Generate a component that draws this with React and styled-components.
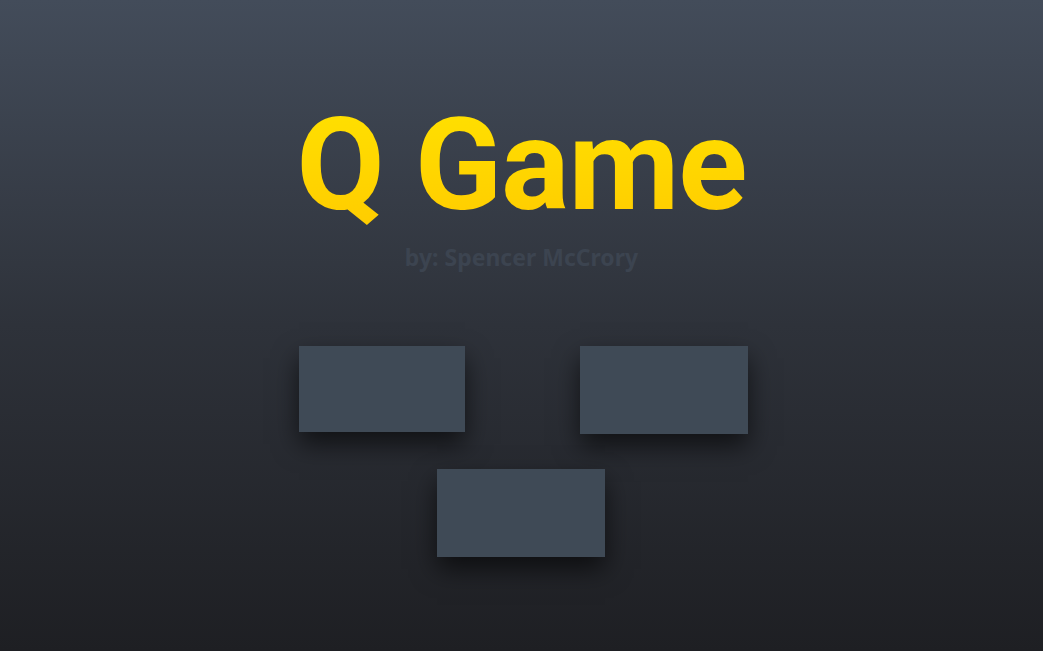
import React from 'react';
import styled, { createGlobalStyle } from 'styled-components';

const GlobalStyle = createGlobalStyle`
  html, body, #root {
    margin: 0;
    height: 100%;
  }
  body {
    background: linear-gradient(to bottom, #434c5a 0%, #2e323a 50%, #1e1f23 100%);
    font-family: "Noto Sans", "Open Sans", sans-serif;
  }
`;

const Page = styled.main`
  height: 100%;
  display: flex;
  flex-direction: column;
  align-items: center;
  padding-top: 101px;
  box-sizing: border-box;
`;

const Title = styled.h1`
  margin: 0;
  font-family: Roboto, "Noto Sans", sans-serif;
  font-size: 128px;
  font-weight: 700;
  line-height: 1;
  letter-spacing: -1px;
  background: linear-gradient(to bottom, #ffe100, #ffcc00);
  -webkit-background-clip: text;
  background-clip: text;
  color: transparent;
`;

const Byline = styled.p`
  margin: 12px 0 0;
  font-size: 23px;
  font-weight: 700;
  color: #3c4450;
`;

const Menu = styled.div`
  margin: 73px 0 0 4px;
  display: grid;
  grid-template-columns: 166px 168px;
  column-gap: 115px;
  row-gap: 35px;
`;

const MenuButton = styled.button`
  width: ${({ $w }) => $w || 168}px;
  height: ${({ $h }) => $h || 88}px;
  border: 0;
  padding: 0;
  background: #3f4a56;
  box-shadow: 0 12px 24px rgba(0, 0, 0, 0.6);
  cursor: pointer;
  grid-column: ${({ $span }) => ($span ? '1 / -1' : 'auto')};
  justify-self: center;
  margin-right: ${({ $span }) => ($span ? '5px' : '0')};
`;

export default function App() {
  return (
    <>
      <GlobalStyle />
      <Page>
        <Title>Q Game</Title>
        <Byline>by: Spencer McCrory</Byline>
        <Menu>
          <MenuButton $w={166} $h={86} aria-label="Play" />
          <MenuButton aria-label="Rules" />
          <MenuButton $span aria-label="Scores" />
        </Menu>
      </Page>
    </>
  );
}
